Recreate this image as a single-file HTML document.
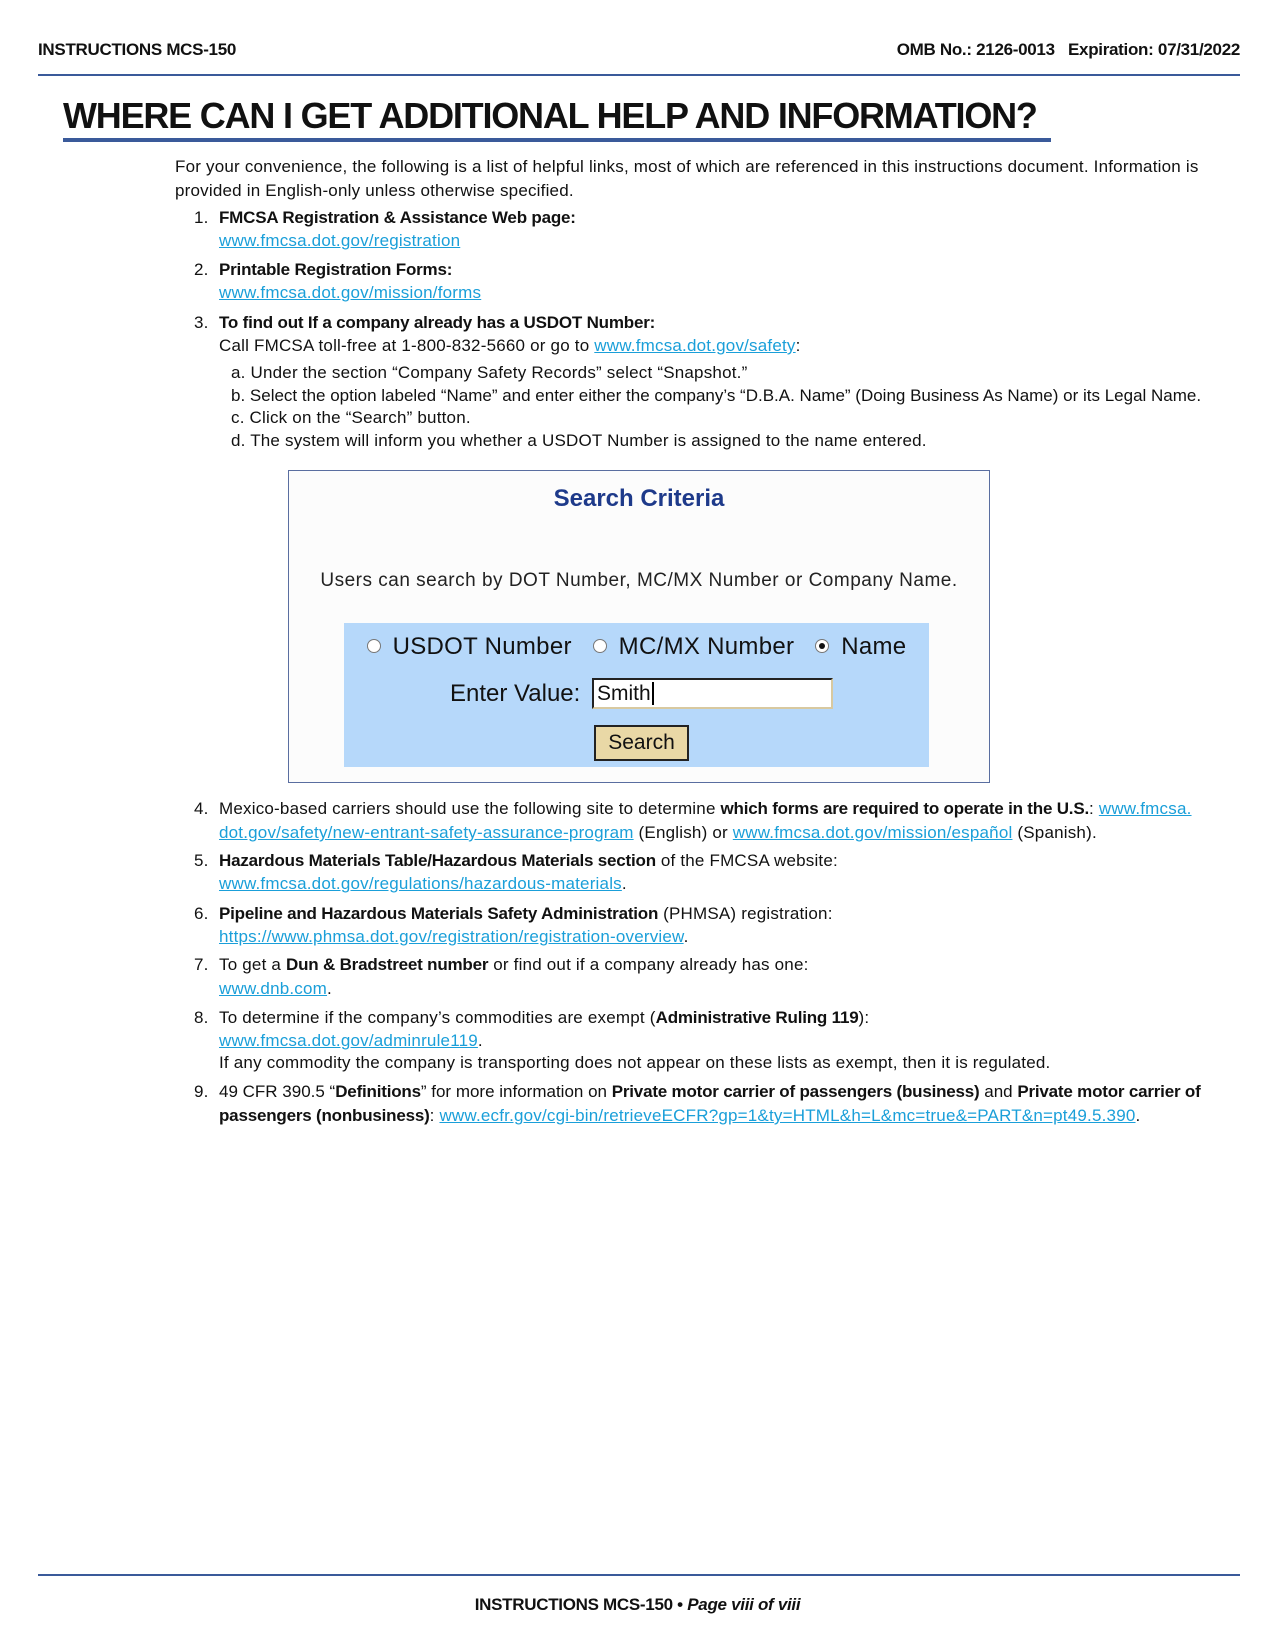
<!DOCTYPE html>
<html><head><meta charset="utf-8"><style>
*{margin:0;padding:0;box-sizing:border-box}
body{width:1275px;height:1650px;background:#fff;position:relative;font-family:"Liberation Sans",sans-serif;color:#111;overflow:hidden}
.l{position:absolute;white-space:nowrap;line-height:22px;font-size:17px;letter-spacing:0.2px}
a{color:#1a9fd9;text-decoration:underline}
b{font-weight:bold;letter-spacing:-0.2px}
.hd{position:absolute;font-weight:900;font-size:17px;line-height:20px;white-space:nowrap;letter-spacing:-0.3px}
.rule{position:absolute;background:#3a5a9a}
.radio{display:inline-block;width:14px;height:14px;border-radius:50%;border:1px solid #777;background:#fff;vertical-align:middle;margin-right:12px;position:relative;top:-2px}
.radio.on::after{content:"";position:absolute;left:3px;top:3px;width:6px;height:6px;border-radius:50%;background:#111}
</style></head><body>
<div class="hd" style="left:38px;top:40px">INSTRUCTIONS MCS-150</div>
<div class="hd" style="right:35px;top:40px">OMB No.: 2126-0013&nbsp;&nbsp;&nbsp;Expiration: 07/31/2022</div>
<div class="rule" style="left:38px;top:74px;width:1202px;height:2px"></div>
<div style="position:absolute;left:63px;top:94px;font-size:36px;font-weight:bold;line-height:44px;white-space:nowrap;letter-spacing:-1.2px">WHERE CAN I GET ADDITIONAL HELP AND INFORMATION?</div>
<div class="rule" style="left:63px;top:138px;width:988px;height:4px"></div>

<div class="l" style="left:175px;top:156px">For your convenience, the following is a list of helpful links, most of which are referenced in this instructions document. Information is</div>
<div class="l" style="left:175px;top:180px">provided in English-only unless otherwise specified.</div>
<div class="l" style="left:194px;top:207px">1.</div><div class="l" style="left:219px;top:207px"><b>FMCSA Registration &amp; Assistance Web page:</b></div>
<div class="l" style="left:219px;top:230px"><a>www.fmcsa.dot.gov/registration</a></div>
<div class="l" style="left:194px;top:259px">2.</div><div class="l" style="left:219px;top:259px"><b>Printable Registration Forms:</b></div>
<div class="l" style="left:219px;top:282px"><a>www.fmcsa.dot.gov/mission/forms</a></div>
<div class="l" style="left:194px;top:312px">3.</div><div class="l" style="left:219px;top:312px"><b>To find out If a company already has a USDOT Number:</b></div>
<div class="l" style="left:219px;top:335px">Call FMCSA toll-free at 1-800-832-5660 or go to <a>www.fmcsa.dot.gov/safety</a>:</div>
<div class="l" style="left:231px;top:362px">a. Under the section “Company Safety Records” select “Snapshot.”</div>
<div class="l" style="left:231px;top:385px;letter-spacing:0">b. Select the option labeled “Name” and enter either the company’s “D.B.A. Name” (Doing Business As Name) or its Legal Name.</div>
<div class="l" style="left:231px;top:407px">c. Click on the “Search” button.</div>
<div class="l" style="left:231px;top:430px">d. The system will inform you whether a USDOT Number is assigned to the name entered.</div>

<div style="position:absolute;left:288px;top:470px;width:702px;height:313px;border:1px solid #5a6ea0;background:#fcfcfc"></div>
<div style="position:absolute;left:288px;top:484px;width:702px;text-align:center;font-size:24px;font-weight:bold;color:#1e3a8a;line-height:30px">Search Criteria</div>
<div style="position:absolute;left:288px;top:569px;width:702px;text-align:center;font-size:19px;color:#222;line-height:24px;letter-spacing:0.5px">Users can search by DOT Number, MC/MX Number or Company Name.</div>
<div style="position:absolute;left:344px;top:623px;width:585px;height:144px;background:#b6d8fa"></div>
<div style="position:absolute;left:344px;top:632px;width:585px;text-align:center;font-size:24px;color:#111;line-height:30px;white-space:nowrap;letter-spacing:0.3px"><span class="radio"></span>USDOT Number&nbsp;&nbsp;&nbsp;<span class="radio"></span>MC/MX Number&nbsp;&nbsp;&nbsp;<span class="radio on"></span>Name</div>
<div style="position:absolute;left:450px;top:679px;font-size:24px;line-height:30px;white-space:nowrap">Enter Value:</div>
<div style="position:absolute;left:592px;top:678px;width:241px;height:31px;background:#fff;border:2px solid #222;border-right-color:#d8c9a0;border-bottom-color:#d8c9a0;font-size:21px;line-height:27px;padding-left:3px">Smith<span style="border-left:2px solid #000;margin-left:1px"></span></div>
<div style="position:absolute;left:594px;top:725px;width:95px;height:36px;background:#e9d8a6;border:2px solid #222;text-align:center;font-size:21px;line-height:32px">Search</div>

<div class="l" style="left:194px;top:798px">4.</div><div class="l" style="left:219px;top:798px">Mexico-based carriers should use the following site to determine <b>which forms are required to operate in the U.S.</b>: <a>www.fmcsa.</a></div>
<div class="l" style="left:219px;top:822px"><a>dot.gov/safety/new-entrant-safety-assurance-program</a> (English) or <a>www.fmcsa.dot.gov/mission/español</a> (Spanish).</div>
<div class="l" style="left:194px;top:850px">5.</div><div class="l" style="left:219px;top:850px"><b>Hazardous Materials Table/Hazardous Materials section</b> of the FMCSA website:</div>
<div class="l" style="left:219px;top:873px"><a>www.fmcsa.dot.gov/regulations/hazardous-materials</a>.</div>
<div class="l" style="left:194px;top:903px">6.</div><div class="l" style="left:219px;top:903px"><b>Pipeline and Hazardous Materials Safety Administration</b> (PHMSA) registration:</div>
<div class="l" style="left:219px;top:926px"><a>https://www.phmsa.dot.gov/registration/registration-overview</a>.</div>
<div class="l" style="left:194px;top:954px">7.</div><div class="l" style="left:219px;top:954px">To get a <b>Dun &amp; Bradstreet number</b> or find out if a company already has one:</div>
<div class="l" style="left:219px;top:978px"><a>www.dnb.com</a>.</div>
<div class="l" style="left:194px;top:1007px">8.</div><div class="l" style="left:219px;top:1007px">To determine if the company’s commodities are exempt (<b>Administrative Ruling 119</b>):</div>
<div class="l" style="left:219px;top:1030px"><a>www.fmcsa.dot.gov/adminrule119</a>.</div>
<div class="l" style="left:219px;top:1052px">If any commodity the company is transporting does not appear on these lists as exempt, then it is regulated.</div>
<div class="l" style="left:194px;top:1081px">9.</div><div class="l" style="left:219px;top:1081px;letter-spacing:0">49 CFR 390.5 “<b>Definitions</b>” for more information on <b>Private motor carrier of passengers (business)</b> and <b>Private motor carrier of</b></div>
<div class="l" style="left:219px;top:1105px"><b>passengers (nonbusiness)</b>: <a>www.ecfr.gov/cgi-bin/retrieveECFR?gp=1&amp;ty=HTML&amp;h=L&amp;mc=true&amp;=PART&amp;n=pt49.5.390</a>.</div>

<div class="rule" style="left:38px;top:1574px;width:1202px;height:2px"></div>
<div class="hd" style="left:0;width:1275px;text-align:center;top:1595px">INSTRUCTIONS MCS-150 • <i>Page viii of viii</i></div>
</body></html>
